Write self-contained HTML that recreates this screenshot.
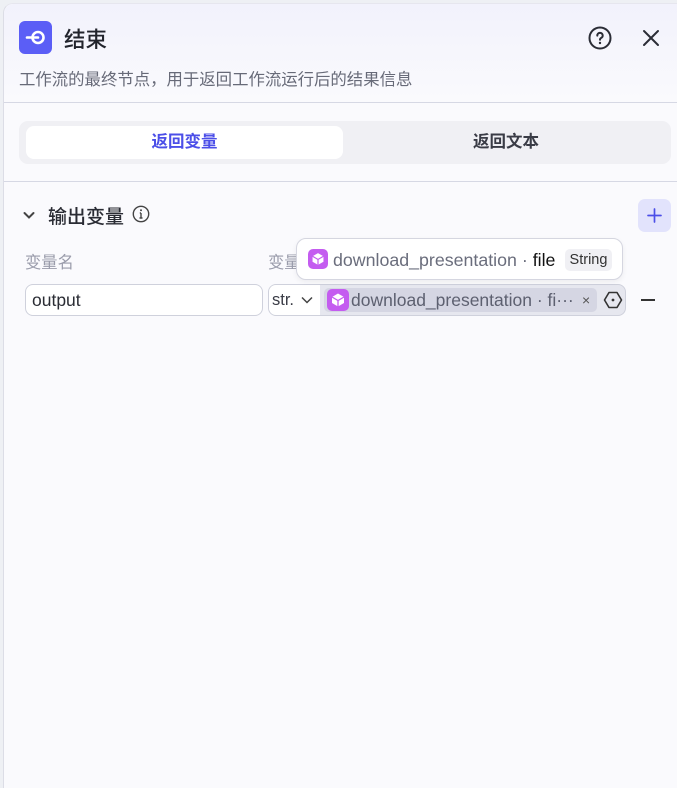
<!DOCTYPE html>
<html><head><meta charset="utf-8"><style>
*{box-sizing:border-box;margin:0;padding:0}
body{width:677px;height:788px;overflow:hidden;background:#eef0f4;font-family:"Liberation Sans","Noto Sans CJK SC",sans-serif;position:relative}
.panel{position:absolute;left:3px;top:3px;width:674px;height:785px;background:#fafafd;border-left:1px solid #dcdde6;border-top:1px solid #e6e6ee;border-radius:10px 0 0 0}
.head{height:99px;background:linear-gradient(#f2f2fc,#fafafd);border-bottom:1px solid #d6d8e4;border-radius:10px 0 0 0;position:relative}
.abs{position:absolute}
</style></head><body>
<div class="panel">
 <div class="head">
  <div class="abs" style="left:15px;top:17px;width:33px;height:33px;border-radius:6px;background:#5b5ef6">
   <svg width="33" height="33" viewBox="0 0 33 33"><circle cx="19" cy="16.5" r="5.5" fill="none" stroke="#fff" stroke-width="2.6"/><line x1="8" y1="16.5" x2="19" y2="16.5" stroke="#fff" stroke-width="2.6" stroke-linecap="round"/></svg>
  </div>
  <div class="abs" style="left:60px;top:19px;font-size:21.5px;font-weight:500;color:#22242c">结束</div>
  <div class="abs" style="left:15px;top:62px;font-size:16.4px;color:#676a78;white-space:nowrap">工作流的最终节点，用于返回工作流运行后的结果信息</div>
  <svg class="abs" style="left:584px;top:22px" width="24" height="24" viewBox="0 0 24 24"><circle cx="12" cy="12" r="10.5" fill="none" stroke="#2b2d36" stroke-width="2"/><path d="M9.3 9.6a2.7 2.7 0 1 1 3.8 2.4c-.7.4-1.1.9-1.1 1.7" fill="none" stroke="#2b2d36" stroke-width="2" stroke-linecap="round"/><circle cx="12" cy="17" r="1.2" fill="#2b2d36"/></svg>
  <svg class="abs" style="left:637px;top:24px" width="20" height="20" viewBox="0 0 20 20"><path d="M3 3L17 17M17 3L3 17" stroke="#2b2d36" stroke-width="2" stroke-linecap="round"/></svg>
 </div>
 <div class="abs" style="left:15px;top:117px;width:652px;height:43px;background:#f0f0f4;border-radius:9px"></div>
 <div class="abs" style="left:22px;top:122px;width:317px;height:33px;background:#fff;border-radius:8px;text-align:center;line-height:33px;font-size:16.5px;font-weight:600;color:#4c4fe8">返回变量</div>
 <div class="abs" style="left:339px;top:122px;width:326px;height:33px;text-align:center;line-height:33px;font-size:16.5px;font-weight:600;color:#3a3c46">返回文本</div>
 <div class="abs" style="left:0;top:177px;width:674px;border-top:1px solid #d6d8e4"></div>
 <svg class="abs" style="left:18px;top:204px" width="14" height="14" viewBox="0 0 14 14"><path d="M2.5 5L7 9.5L11.5 5" fill="none" stroke="#444" stroke-width="2" stroke-linecap="round"/></svg>
 <div class="abs" style="left:44px;top:198px;font-size:19px;font-weight:500;color:#2a2c34">输出变量</div>
 <svg class="abs" style="left:128px;top:201px" width="18" height="18" viewBox="0 0 18 18"><circle cx="9" cy="9" r="7.7" fill="none" stroke="#444" stroke-width="1.4"/><path d="M9 8v5M7.5 13h3M7.8 8H9" stroke="#444" stroke-width="1.4"/><circle cx="9" cy="5.3" r="1" fill="#444"/></svg>
 <div class="abs" style="left:634px;top:195px;width:33px;height:33px;border-radius:7px;background:#e2e3fc"><svg width="33" height="33" viewBox="0 0 33 33"><path d="M16.5 10v13M10 16.5h13" stroke="#4c4fe8" stroke-width="1.7" stroke-linecap="round"/></svg></div>
 <div class="abs" style="left:21px;top:245px;font-size:16.3px;color:#9a9cab">变量名</div>
 <div class="abs" style="left:264px;top:245px;font-size:16.3px;color:#9a9cab">变量</div>
 <div class="abs" style="left:21px;top:280px;width:238px;height:32px;border:1px solid #cfd1dc;border-radius:8px;background:#fff;padding-left:6px;line-height:30px;font-size:17.5px;color:#2a2c34">output</div>
 <div class="abs" style="left:264px;top:280px;width:358px;height:32px;border:1px solid #cfd1dc;border-radius:8px;background:#e6e7ef;overflow:hidden">
  <div class="abs" style="left:0;top:0;width:51px;height:30px;background:#fff;padding-left:3px;line-height:30px;font-size:16.5px;color:#3a3c46">str.<svg style="position:absolute;left:31px;top:10px" width="14" height="10" viewBox="0 0 14 10"><path d="M2 2.5L7 7.5L12 2.5" fill="none" stroke="#444" stroke-width="1.5"/></svg></div>
  <div class="abs" style="left:55px;top:3px;width:273px;height:24px;background:#d5d6e3;border-radius:5px"></div>
  <div class="abs" style="left:58px;top:4px;width:22px;height:22px;border-radius:5px;background:#c45cf0"><svg width="22" height="22" viewBox="0 0 22 22"><path d="M11 4.5L17 8v6L11 17.5L5 14V8Z" fill="#fff"/><path d="M5 8L11 11.5L17 8M11 11.5V17.5" stroke="#c45cf0" stroke-width="1.3" fill="none"/></svg></div>
  <div class="abs" style="left:82px;top:0;line-height:30px;font-size:17.5px;color:#5d6070;white-space:nowrap">download_presentation · fi···</div>
  <div class="abs" style="left:313px;top:0;line-height:30px;font-size:14px;color:#555">×</div>
  <svg class="abs" style="left:334px;top:5px" width="20" height="20" viewBox="0 0 20 20"><path d="M6 2.5h8l4.5 7.5l-4.5 7.5h-8L1.5 10Z" fill="none" stroke="#333" stroke-width="1.6" stroke-linejoin="round"/><circle cx="10" cy="10" r="1.4" fill="#333"/></svg>
 </div>
 <div class="abs" style="left:637px;top:295px;width:14px;border-top:2px solid #333"></div>
 <div class="abs" style="left:292px;top:234px;width:327px;height:42px;background:#fff;border:1px solid #d5d6e0;border-radius:10px;box-shadow:0 2px 6px rgba(0,0,0,.06)">
  <div class="abs" style="left:11px;top:10px;width:20px;height:20px;border-radius:5px;background:#c45cf0"><svg width="20" height="20" viewBox="0 0 22 22"><path d="M11 4.5L17 8v6L11 17.5L5 14V8Z" fill="#fff"/><path d="M5 8L11 11.5L17 8M11 11.5V17.5" stroke="#c45cf0" stroke-width="1.3" fill="none"/></svg></div>
  <div class="abs" style="left:36px;top:0;line-height:42px;font-size:17.8px;color:#6a6d7c;white-space:nowrap">download_presentation · <span style="color:#111">file</span></div>
  <div class="abs" style="left:268px;top:10px;width:47px;height:22px;background:#f0f0f4;border-radius:5px;text-align:center;line-height:22px;font-size:14.5px;color:#333">String</div>
 </div>
</div>
</body></html>
